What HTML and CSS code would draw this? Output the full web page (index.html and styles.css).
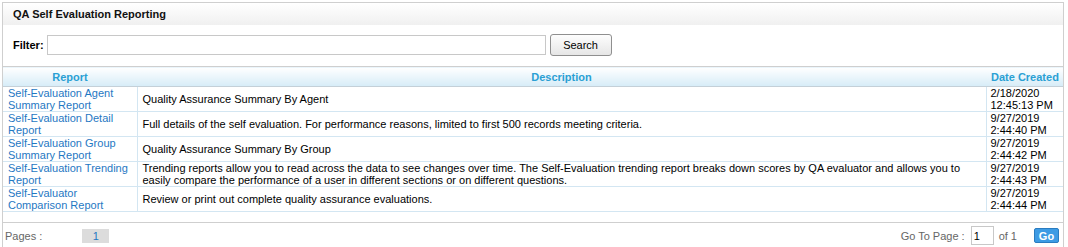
FILE: index.html
```html
<!DOCTYPE html>
<html lang="en">
<head>
    <meta charset="UTF-8">
    <title>QA Self Evaluation Reporting</title>
    <link rel="stylesheet" href="styles.css">
</head>
<body>
    <div class="panel">
        <div class="panel-title">QA Self Evaluation Reporting</div>

        <div class="filter-row">
            <label for="filter">Filter:</label>
            <input type="text" id="filter" class="filter-input">
            <button class="search-btn">Search</button>
        </div>

        <table class="report-table">
            <thead>
                <tr>
                    <th class="col-report">Report</th>
                    <th class="col-desc">Description</th>
                    <th class="col-date">Date Created</th>
                </tr>
            </thead>
            <tbody>
                <tr>
                    <td><a href="#">Self-Evaluation Agent Summary Report</a></td>
                    <td class="desc">Quality Assurance Summary By Agent</td>
                    <td>2/18/2020<br>12:45:13 PM</td>
                </tr>
                <tr>
                    <td><a href="#">Self-Evaluation Detail Report</a></td>
                    <td class="desc">Full details of the self evaluation. For performance reasons, limited to first 500 records meeting criteria.</td>
                    <td>9/27/2019<br>2:44:40 PM</td>
                </tr>
                <tr>
                    <td><a href="#">Self-Evaluation Group Summary Report</a></td>
                    <td class="desc">Quality Assurance Summary By Group</td>
                    <td>9/27/2019<br>2:44:42 PM</td>
                </tr>
                <tr>
                    <td><a href="#">Self-Evaluation Trending Report</a></td>
                    <td class="desc">Trending reports allow you to read across the data to see changes over time. The Self-Evaluation trending report breaks down scores by QA evaluator and allows you to easily compare the performance of a user in different sections or on different questions.</td>
                    <td>9/27/2019<br>2:44:43 PM</td>
                </tr>
                <tr>
                    <td><a href="#">Self-Evaluator Comparison Report</a></td>
                    <td class="desc">Review or print out complete quality assurance evaluations.</td>
                    <td>9/27/2019<br>2:44:44 PM</td>
                </tr>
            </tbody>
        </table>

        <div class="pager">
            <div class="pages">
                <span class="pages-label">Pages :</span>
                <span class="page-num">1</span>
            </div>
            <div class="goto">
                <span>Go To Page :</span>
                <input type="text" class="page-input" value="1">
                <span>of 1</span>
                <button class="go-btn">Go</button>
            </div>
        </div>
    </div>
</body>
</html>
```

FILE: styles.css
```css
body {
    margin: 0;
    padding: 2px 0 0 2px;
    font-family: "Liberation Sans", Arial, sans-serif;
    font-size: 11px;
    color: #000;
    background: #fff;
}
.panel {
    width: 1060px;
    border: 1px solid #cfcfcf;
    border-bottom: none;
}
.panel-title {
    height: 22px;
    line-height: 22px;
    padding-left: 10px;
    font-weight: bold;
    color: #111;
    background: linear-gradient(#ffffff, #f0f0f0);
}
.filter-row {
    display: flex;
    align-items: center;
    height: 41px;
    padding-left: 10px;
    padding-bottom: 1px;
    box-sizing: border-box;
}
.filter-row label {
    font-weight: bold;
    margin-right: 3px;
}
.filter-input {
    width: 499px;
    height: 20px;
    box-sizing: border-box;
    border: 1px solid #c8c8c8;
    margin: 0;
    padding: 0 3px;
    font-size: 11px;
}
.search-btn {
    margin-left: 4px;
    width: 62px;
    height: 22px;
    font-family: "Liberation Sans", Arial, sans-serif;
    font-size: 11px;
    color: #000;
    border: 1px solid #8f8f8f;
    border-radius: 3px;
    background: linear-gradient(#fdfdfd, #e6e6e6);
    padding: 0;
}
.report-table {
    width: 100%;
    border-collapse: collapse;
    border-top: 1px solid #cfcfcf;
    font-size: 11px;
}
.report-table th {
    height: 19px;
    padding: 0;
    font-weight: bold;
    color: #2aa0d4;
    background: linear-gradient(#ffffff, #d6ecf7);
    border-bottom: 1px solid #c4d0d8;
}
.report-table th.col-report {
    width: 134px;
}
.report-table th.col-date {
    width: 72px;
    text-align: left;
    padding-left: 5px;
    white-space: nowrap;
}
.report-table td {
    padding: 0 4px 0 5px;
    line-height: 12px;
    height: 24px;
    vertical-align: middle;
    border-bottom: 1px solid #d3e6f2;
    border-left: 1px solid #d3e6f2;
}
.report-table td:first-child {
    border-left: none;
}
.report-table td:last-child {
    padding-left: 4px;
}
.report-table a {
    color: #1f78c3;
    text-decoration: none;
}
.pager {
    display: flex;
    justify-content: space-between;
    align-items: center;
    margin-top: 10px;
    height: 25px;
    border-top: 1px solid #cfcfcf;
    color: #666;
}
.pages {
    display: flex;
    align-items: center;
    padding-left: 2px;
}
.page-num {
    display: inline-block;
    margin-left: 40px;
    width: 27px;
    height: 14px;
    line-height: 14px;
    text-align: center;
    background: #dcdcdc;
    color: #1f78c3;
}
.goto {
    display: flex;
    align-items: center;
    padding-right: 4px;
    font-size: 11px;
}
.page-input {
    width: 23px;
    height: 19px;
    box-sizing: border-box;
    margin: 0 5px 0 6px;
    padding: 0 2px;
    border: 1px solid #c8c8c8;
    font-size: 11px;
}
.go-btn {
    margin-left: 17px;
    width: 25px;
    height: 15px;
    padding: 0;
    font-family: "Liberation Sans", Arial, sans-serif;
    font-size: 11px;
    font-weight: bold;
    color: #fff;
    background: #3d9be4;
    border: 1px solid #2a7cc0;
    border-radius: 2px;
}
```
